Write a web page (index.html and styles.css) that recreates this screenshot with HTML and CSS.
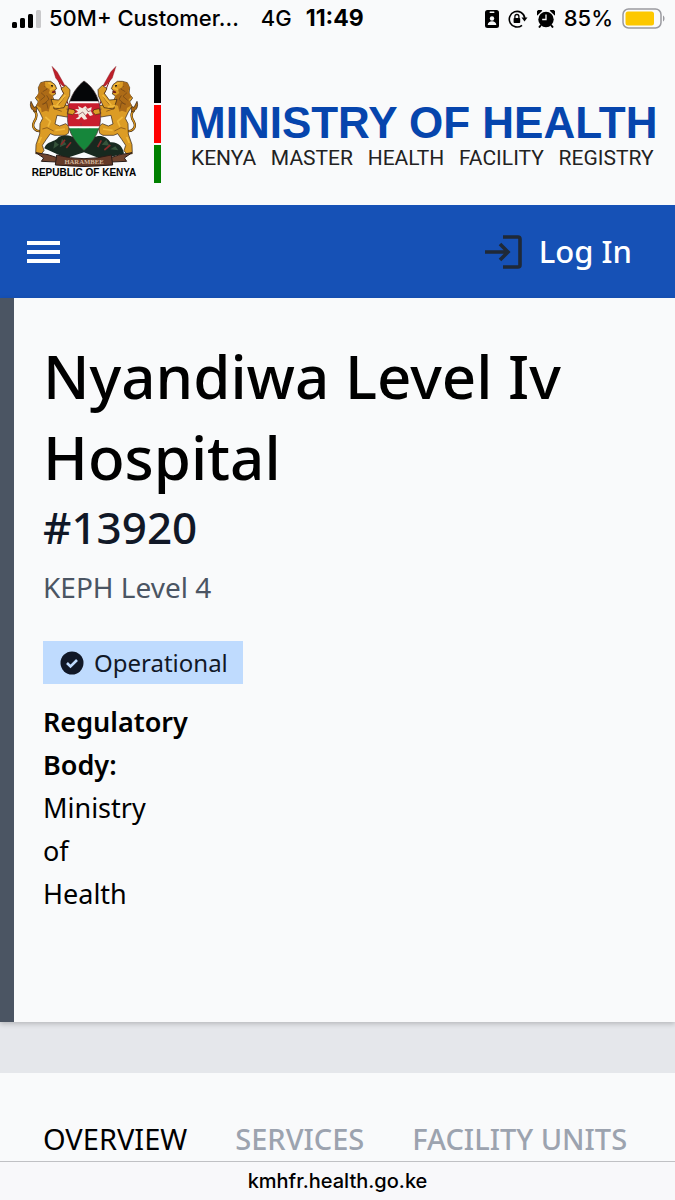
FILE: index.html
```html
<!DOCTYPE html>
<html lang="en">
<head>
  <meta charset="UTF-8">
  <meta name="viewport" content="width=device-width, initial-scale=1.0">
  <title>Nyandiwa Level Iv Hospital - KMHFR</title>
  <link rel="stylesheet" href="styles.css">
</head>
<body>
  <div class="status-bar">
    <svg class="signal" viewBox="0 0 30 20" aria-hidden="true">
      <rect x="0" y="13" width="5" height="6" rx="1.5"/>
      <rect x="8" y="9" width="5" height="10" rx="1.5"/>
      <rect x="16" y="5" width="5" height="14" rx="1.5"/>
      <rect x="24" y="1" width="5" height="18" rx="1.5" fill="#c9c9cb"/>
    </svg>
    <span class="carrier">50M+ Customer...</span>
    <span class="network">4G</span>
    <strong class="time">11:49</strong>
    <div class="status-right">
      <svg class="id-icon" viewBox="0 0 14 18" aria-hidden="true">
        <rect width="14" height="18" rx="2.5"/>
        <rect x="4.5" y="1.5" width="5" height="1.5" rx=".7" fill="#f9fafb"/>
        <circle cx="7" cy="8.5" r="2.2" fill="#f9fafb"/>
        <path d="M2.7 15c.2-2.600 2-3.700 4.300-3.700s4.100 1.100 4.300 3.700z" fill="#f9fafb"/>
      </svg>
      <svg class="lock-icon" viewBox="0 0 20 18" aria-hidden="true">
        <path d="M14 15.300A7.800 7.800 0 1 1 16.800 8" fill="none" stroke="#000" stroke-width="1.600"/>
        <path d="M13.500 7.500h6l-3 4z"/>
        <rect x="5.600" y="8" width="6.600" height="5" rx=".8"/>
        <path d="M6.900 8V6.500a2 2 0 0 1 4 0V8" fill="none" stroke="#000" stroke-width="1.300"/>
      </svg>
      <svg class="alarm-icon" viewBox="0 0 18 18" aria-hidden="true">
        <circle cx="9" cy="9.500" r="7.700"/>
        <path d="M.3 5.500a3.400 3.400 0 0 1 5-4.700zM17.700 5.500a3.400 3.400 0 0 0-5-4.700z"/>
        <path d="M4 15l-2 2.500M14 15l2 2.500" stroke="#000" stroke-width="2"/>
        <path d="M9 4.500v5H5.200" fill="none" stroke="#f9fafb" stroke-width="1.300"/>
      </svg>
      <span>85%</span>
      <svg class="battery" viewBox="0 0 43 22" aria-hidden="true">
        <rect x="1" y="1" width="38" height="19" rx="5.500" fill="none" stroke="#9a9aa0" stroke-width="1.500"/>
        <rect x="3.500" y="3.500" width="28.500" height="14" rx="2.500" fill="#fdc800"/>
        <path d="M41 7.500c2 1 2 5 0 6z" fill="#9a9aa0"/>
      </svg>
    </div>
  </div>

  <header class="brand">
    <div class="emblem">
      <svg class="arms" viewBox="28 28 330 306" role="img" aria-label="Kenya coat of arms">
        <path d="M74 278C82 254 104 262 117 244C137 234 155 239 168 249L193 279L220 246C241 235 263 243 272 260C296 258 310 274 313 294L245 310L193 290L139 308Z" fill="#17291f"/>
        <path d="M105 257l13 10-17 12zM127 249l13 17-20 9zM260 252l9 18-23-3zM287 272l-15 9 24 3z" fill="#35533a"/>
        <path d="M136 252l-12 15M154 260l-14 17M245 254l-11 20M272 268l-18 15" stroke="#872b2a" stroke-width="5"/>
        <defs>
          <g id="lion">
            <path d="M103 43L178 224" stroke="#7e151a" stroke-width="3"/>
            <path d="M97 32L113 49L137 92L128 90L108 67Z" fill="#bd1f2a" stroke="#75191e" stroke-width="1"/>
            <path d="M69 224C48 232 35 215 43 199C53 185 53 171 42 164" fill="none" stroke="#3d2510" stroke-width="7"/>
            <path d="M69 224C48 232 35 215 43 199C53 185 53 171 42 164" fill="none" stroke="#d99720" stroke-width="4"/>
            <path d="M34 137C29 151 34 165 50 169L52 152L43 155Z" fill="#a86611" stroke="#2b1b10" stroke-width="2"/>
            <path d="M56 96L63 81L78 77L93 77L106 87L111 99L105 104L108 115L98 121L107 142L151 151L158 178L142 184L112 179L106 205L120 211L138 204L149 213L146 233L136 239L104 239L92 234L80 251L68 269L73 285L64 296L48 294L49 267L60 235L61 204L69 188L60 169L49 152L56 139L47 127L58 114Z" fill="#dc9c25" stroke="#2b1b10" stroke-width="2"/>
            <path d="M76 78L63 82L56 97L60 105L50 124L59 131L50 149L64 157L66 170L79 165L87 168L91 151L103 145L97 132L101 122L87 112L92 100L77 97Z" fill="#ad6b17"/>
            <path d="M94 131L117 133L132 113L124 99L138 89L151 102L150 120L133 156L104 160Z" fill="#dc9c25" stroke="#2b1b10" stroke-width="2"/>
            <path d="M74 91l9 9-14 8M64 111l12 11-14 12M81 119l7 12-17 15M67 146l14-5 4 18M101 158l25 9M68 220l14-4 20 10M117 147l17-22M140 160l13 4M141 172l13-1" fill="none" stroke="#6e4315" stroke-width="2"/>
            <path d="M86 81l14 7 4 9-14 5M99 150l23 4M77 184l15 13-7 16M65 244l-8 18M107 224l29-4M111 149l26-31" fill="none" stroke="#f0b93b" stroke-width="5"/>
            <path d="M94 90l6 1" stroke="#17130f" stroke-width="4"/>
            <path d="M99 105h9l-3 7h-9z" fill="#762018"/>
          </g>
          <clipPath id="shield"><path d="M193 76C230 100 251 150 240 212Q226 257 193 285Q158 255 146 212C135 154 157 104 193 76Z"/></clipPath>
        </defs>
        <use href="#lion"/>
        <use href="#lion" transform="translate(386 0) scale(-1 1)"/>
        <g clip-path="url(#shield)">
          <path d="M130 70h126v69H130z" fill="#050608"/>
          <path d="M130 137h126v82H130z" fill="#fff"/>
          <path d="M130 143h126v69H130z" fill="#c91d2e"/>
          <path d="M130 218h126v70H130z" fill="#16863b"/>
        </g>
        <path d="M193 76C230 100 251 150 240 212Q226 257 193 285Q158 255 146 212C135 154 157 104 193 76Z" fill="none" stroke="#3c2929" stroke-width="2"/>
        <path d="M147 159l16 3 4 7-8 8-15-3zM239 159l-16 3-4 7 8 8 15-3z" fill="#dc9c25" stroke="#3d2510" stroke-width="2"/>
        <path d="M188 158l9-7 7 8 12-5-2 13 6 11-9 3-7-9-7 8 6 10-10 2-8-9-7 8-10-1 9-7-1-9-13 1 12-7-9-8 12 1-3-10z" fill="#f4e9df"/>
        <path d="M177 177l12-8 9 11M199 158l6 10 9-3M184 202v9" fill="none" stroke="#793640" stroke-width="2"/>
        <path d="M49 291L85 297L116 307L112 319L65 317L72 307ZM337 291L301 297L270 307L274 319L321 317L314 307Z" fill="#70442e" stroke="#2a1c18" stroke-width="3"/>
        <path d="M111 298Q193 320 275 298L279 328Q193 337 107 328Z" fill="#643a28" stroke="#2a1c18" stroke-width="3"/>
        <text x="193" y="325" class="motto">HARAMBEE</text>
      </svg>
      <span class="republic">REPUBLIC OF KENYA</span>
    </div>
    <div class="flag-line">
      <span class="black"></span>
      <span class="red"></span>
      <span class="green"></span>
    </div>
    <div class="brand-text">
      <div class="ministry">MINISTRY OF HEALTH</div>
      <div class="registry">
        <span>KENYA</span> <span>MASTER</span> <span>HEALTH</span> <span>FACILITY</span> <span>REGISTRY</span>
      </div>
    </div>
  </header>

  <nav class="navbar">
    <button type="button" class="menu-btn" aria-label="Menu">
      <svg viewBox="0 0 34 24" aria-hidden="true"><path d="M0 3h33M0 12h33M0 21h33" stroke="#fff" stroke-width="4"/></svg>
    </button>
    <a href="#" class="login">
      <svg viewBox="0 0 38 34" aria-hidden="true"><path d="M18 2h15q2 0 2 2v26q0 2-2 2H18M0 17h22M15 9l8 8-8 8" fill="none" stroke="#1f2937" stroke-width="3.600"/></svg>
      <span>Log In</span>
    </a>
  </nav>

  <main>
    <section class="facility">
      <h1>Nyandiwa Level Iv Hospital</h1>
      <h2>#13920</h2>
      <p class="level">KEPH Level 4</p>
      <div class="badge">
        <svg viewBox="0 0 24 24" aria-hidden="true"><circle cx="12" cy="12" r="11.500" fill="#111827"/><path d="M7 12l3.500 3.500 6.500-6.500" fill="none" stroke="#bfdbfe" stroke-width="2.600"/></svg>
        <span>Operational</span>
      </div>
      <div class="regulator">
        <strong>Regulatory Body:</strong>
        <span>Ministry of Health</span>
      </div>
    </section>

    <div class="tabs">
      <button type="button" class="tab active">OVERVIEW</button>
      <button type="button" class="tab">SERVICES</button>
      <button type="button" class="tab">FACILITY UNITS</button>
    </div>
  </main>

  <footer class="url-bar">kmhfr.health.go.ke</footer>
</body>
</html>
```
FILE: styles.css
```css
* {
  box-sizing: border-box;
}
body {
  margin: 0;
  min-height: 100vh;
  display: flex;
  flex-direction: column;
  background-color: #f9fafb;
  color: #000;
  font-family: "Noto Sans", "Open Sans", sans-serif;
  font-size: 27px;
  line-height: 43px;
}
h1, h2, p {
  margin: 0;
  font-weight: 500;
}
button {
  border: none;
  padding: 0;
  background: none;
  font: inherit;
  cursor: pointer;
}
svg {
  display: block;
  flex: none;
}
.status-bar {
  display: flex;
  align-items: center;
  padding: 0 10px 0 12px;
  font-family: Inter, sans-serif;
  font-size: 22px;
  font-weight: 500;
  line-height: 37px;
  white-space: nowrap;
}
.signal {
  width: 30px;
  height: 20px;
  margin-right: 7px;
}
.network {
  margin-left: 22px;
}
.time {
  margin-left: 14px;
  font-size: 23px;
  font-weight: 700;
}
.status-right {
  display: flex;
  align-items: center;
  gap: 9px;
  margin-left: auto;
}
.id-icon {
  width: 14px;
  height: 18px;
}
.lock-icon {
  width: 20px;
  height: 18px;
}
.alarm-icon {
  width: 18px;
  height: 18px;
}
.battery {
  width: 43px;
  height: 22px;
}
.brand {
  display: flex;
  align-items: flex-start;
  padding: 28px 20px 22px 29px;
}
.emblem {
  display: flex;
  flex: none;
  flex-direction: column;
  align-items: center;
  width: 110px;
}
.arms {
  width: 110px;
  height: 102px;
}
.motto {
  fill: #d2b59b;
  font-family: "Liberation Serif", serif;
  font-size: 20px;
  font-weight: 700;
  text-anchor: middle;
}
.republic {
  font-family: "Liberation Sans", Arial, sans-serif;
  font-size: 10px;
  font-weight: 700;
  line-height: 12px;
  white-space: nowrap;
}
.flag-line {
  display: flex;
  flex: none;
  flex-direction: column;
  gap: 2px;
  width: 7px;
  margin-left: 15px;
}
.flag-line span {
  height: 38px;
}
.black {
  background-color: #000;
}
.red {
  background-color: #f00;
}
.green {
  background-color: #008000;
}
.brand-text {
  flex: 1;
  margin-left: 28px;
  padding-top: 36px;
  white-space: nowrap;
}
.ministry {
  color: #0645ad;
  font-family: "Liberation Sans", Arial, sans-serif;
  font-size: 44px;
  font-weight: 700;
  line-height: 44px;
}
.registry {
  display: flex;
  justify-content: space-between;
  padding: 0 4px 0 2px;
  color: #222;
  font-family: Roboto, sans-serif;
  font-size: 21px;
  line-height: 26px;
}
.navbar {
  display: flex;
  align-items: center;
  justify-content: space-between;
  padding: 25px 43px 25px 27px;
  background-color: #1651b6;
}
.menu-btn svg {
  width: 34px;
  height: 24px;
}
.login {
  display: flex;
  align-items: center;
  gap: 16px;
  color: #fff;
  font-size: 31px;
  font-weight: 500;
  text-decoration: none;
}
.login svg {
  width: 38px;
  height: 34px;
}
main {
  background-color: #e5e7eb;
}
.facility {
  padding: 38px 29px 107px;
  border-left: 14px solid #4b5563;
  background-color: #f9fafb;
  box-shadow: 0 2px 5px rgba(0, 0, 0, 0.2);
}
.facility h1 {
  font-size: 60px;
  line-height: 81px;
}
.facility h2 {
  margin-top: 2px;
  color: #111827;
  font-size: 44px;
  line-height: 54px;
}
.level {
  margin-top: 12px;
  color: #4b5563;
  font-size: 28px;
  font-weight: 400;
}
.badge {
  display: flex;
  align-items: center;
  gap: 10px;
  width: fit-content;
  margin-top: 32px;
  padding: 0 15px 0 17px;
  background-color: #bfdbfe;
  color: #111827;
  font-size: 24px;
}
.badge svg {
  width: 24px;
  height: 24px;
}
.regulator {
  display: flex;
  flex-direction: column;
  width: 100px;
  margin-top: 16px;
}
.regulator strong {
  font-weight: 600;
}
.tabs {
  display: flex;
  gap: 48px;
  margin-top: 51px;
  padding: 44px 29px 1px 43px;
  background-color: #f9fafb;
  white-space: nowrap;
}
.tab {
  color: #9ca3af;
  font-size: 29px;
  font-weight: 500;
}
.tab.active {
  color: #000;
  font-weight: 400;
}
.url-bar {
  flex: 1;
  border-top: 1px solid #c0c1c4;
  background-color: #f8f8fa;
  font-family: Inter, sans-serif;
  font-size: 20px;
  font-weight: 500;
  line-height: 38px;
  text-align: center;
}
```
